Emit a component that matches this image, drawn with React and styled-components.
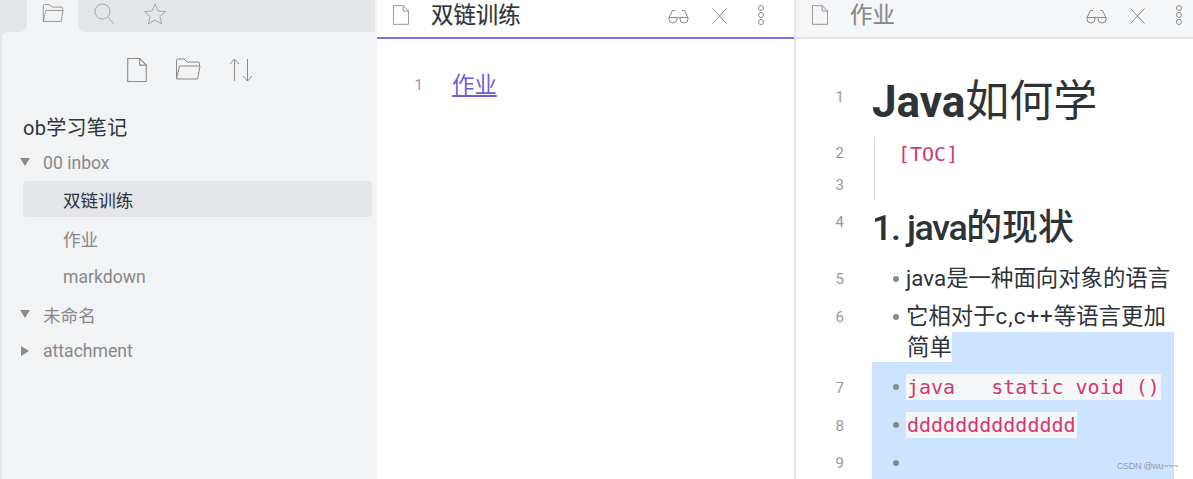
import React from 'react';
import styled, { createGlobalStyle } from 'styled-components';

const GlobalStyle = createGlobalStyle`
  html, body {
    margin: 0;
    height: 100%;
    overflow: hidden;
    background: #ffffff;
  }
  body {
    font-family: Roboto, "Noto Sans CJK SC", sans-serif;
    color: #2e3338;
  }
`;

const Page = styled.div`
  display: flex;
  height: 479px;
  width: 1193px;
  overflow: hidden;
  position: relative;
`;

const Sidebar = styled.aside`
  flex: 0 0 377px;
  display: flex;
  flex-direction: column;
  background: #e3e5e8;
`;

const TabStrip = styled.div`
  flex: 0 0 32px;
  display: flex;
  background: #f2f3f5;
`;

const TabLead = styled.div`
  flex: 0 0 27px;
  background: #e3e5e8;
  border-bottom-right-radius: 8px;
`;

const ActiveTab = styled.div`
  flex: 0 0 51px;
  display: flex;
  align-items: flex-start;
  justify-content: center;
  padding-top: 3px;
  box-sizing: border-box;
`;

const TabRest = styled.div`
  flex: 1;
  display: flex;
  align-items: flex-start;
  gap: 30px;
  padding: 3px 0 0 16px;
  margin-right: 2px;
  background: #e3e5e8;
  border-bottom-left-radius: 8px;
`;

const SidebarBody = styled.div`
  flex: 1;
  margin-left: 2px;
  background: #f2f3f5;
  border-top-left-radius: 6px;
  padding: 0 5px 0 21px;
`;

const FileActions = styled.div`
  display: flex;
  justify-content: center;
  gap: 28px;
  height: 82px;
  padding-top: 26px;
  margin-left: -15px;
  box-sizing: border-box;
`;

const VaultName = styled.div`
  font-size: 20px;
  line-height: 28px;
  letter-spacing: 0.3px;
  color: #2e3338;
  margin-bottom: 2px;
`;

const TreeRow = styled.div`
  display: flex;
  align-items: center;
  height: ${(p) => p.$height || 38}px;
  margin-bottom: ${(p) => (p.$active ? 2 : 0)}px;
  font-size: 17.6px;
  color: ${(p) => (p.$active ? '#2e3338' : '#888888')};
  padding-left: ${(p) => (p.$nested ? 40 : 0)}px;
  border-radius: 4px;
  background: ${(p) => (p.$active ? '#e3e5e8' : 'transparent')};
`;

const Caret = styled.svg`
  width: 20px;
  flex: 0 0 20px;
  height: 12px;
  margin: 0 3px 0 -3px;
  fill: #8a8a8a;
`;

const Pane = styled.section`
  display: flex;
  flex-direction: column;
  flex: ${(p) => (p.$grow ? 1 : '0 0 417px')};
  min-width: 0;
`;

const PaneHeader = styled.header`
  flex: 0 0 37px;
  height: 37px;
  display: flex;
  align-items: center;
  box-sizing: content-box;
  padding: 0 ${(p) => p.$pad}px 0 16px;
  background: ${(p) => (p.$focused ? '#ffffff' : '#f5f6f8')};
  border-bottom: 2px solid ${(p) => (p.$focused ? '#7f6df2' : '#e3e5e8')};
`;

const PaneHeaderRow = styled.div`
  flex: 1;
  display: flex;
  align-items: center;
  height: 30px;
  margin-bottom: 7px;
`;

const PaneTitle = styled.div`
  flex: 1;
  margin-left: 22px;
  font-size: 22.4px;
  line-height: 30px;
  color: ${(p) => (p.$focused ? '#2e3338' : '#888888')};
  -webkit-text-stroke: 0.2px currentColor;
`;

const HeaderActions = styled.div`
  display: flex;
  align-items: center;
`;

const ActionSlot = styled.span`
  display: block;
  margin-right: ${(p) => p.$gap || 0}px;
  padding-top: ${(p) => p.$top || 0}px;
`;

const LinkBody = styled.div`
  display: flex;
  padding-top: 31px;
`;

const Gutter = styled.div`
  flex: 0 0 46px;
  text-align: right;
  font-size: 15px;
  color: #999999;
  line-height: 30px;
  margin-right: 29px;
`;

const InternalLink = styled.a`
  font-size: 22.4px;
  line-height: 30px;
  color: #705dcf;
  text-decoration: underline;
`;

const Divider = styled.div`
  flex: 0 0 2px;
  background: #e3e5e8;
`;

const Editor = styled.div`
  display: flex;
  flex-direction: column;
  padding: 31px 19px 0 0;
`;

const Line = styled.div`
  display: flex;
  align-items: stretch;
  flex: 0 0 ${(p) => p.$height}px;
  height: ${(p) => p.$height}px;
`;

const LineNumber = styled.div`
  flex: 0 0 48px;
  text-align: right;
  font-size: 15px;
  color: #999999;
  line-height: 20px;
  padding-top: ${(p) => p.$top}px;
  margin-right: 28px;
  box-sizing: border-box;
`;

const LineBody = styled.div`
  flex: 1;
  min-width: 0;
  background: ${(p) => (p.$selected ? '#cce4ff' : 'transparent')};
`;

const Heading = styled.div`
  font-size: ${(p) => p.$size}px;
  font-weight: ${(p) => p.$weight || 400};
  line-height: ${(p) => p.$line}px;
  padding-top: ${(p) => p.$top || 0}px;
  color: #2e3338;

  b {
    font-weight: ${(p) => p.$latin || 700};
    letter-spacing: ${(p) => p.$track || 0}px;
  }
`;

const Quote = styled.div`
  height: 100%;
  margin-left: 2px;
  border-left: 1px solid #d8d8d8;
  padding: 4px 0 0 23px;
  box-sizing: border-box;
`;

const Code = styled.code`
  display: inline-block;
  vertical-align: top;
  font-family: "DejaVu Sans Mono", "Liberation Mono", monospace;
  font-size: 20px;
  line-height: 26px;
  color: #d13a6c;
  white-space: pre;
  padding: ${(p) => (p.$filled ? '0 1px' : '0')};
  background: ${(p) => (p.$filled ? '#f5f6f8' : 'transparent')};
`;

const BulletBody = styled.div`
  display: flex;
  align-items: flex-start;
  font-size: 22.4px;
  line-height: ${(p) => p.$line || 32}px;
  padding-top: ${(p) => p.$top}px;
  color: #2e3338;
`;

const Dot = styled.span`
  flex: 0 0 6px;
  width: 6px;
  height: 6px;
  border-radius: 50%;
  background: #8a8a8a;
  margin: ${(p) => p.$top}px 7px 0 21px;
`;

const BulletText = styled.div`
  flex: 1;
  min-width: 0;
`;

const Spaced = styled.span`
  letter-spacing: 1px;
`;

const WrapTail = styled.div`
  display: flex;
  height: 30px;
  padding-left: 35px;
  font-size: 22.4px;
  line-height: 30px;
  color: #2e3338;
`;

const SelectedTail = styled.div`
  flex: 1;
  background: #cce4ff;
`;

const Watermark = styled.div`
  position: absolute;
  right: 15px;
  bottom: 7px;
  font-family: "Liberation Sans", sans-serif;
  font-size: 9px;
  line-height: 12px;
  letter-spacing: -0.3px;
  color: #9a9a9a;
`;

const IconSvg = styled.svg`
  display: block;
  fill: none;
  stroke: ${(p) => p.$stroke || '#8a8a8a'};
  stroke-width: 1;
`;

const FileIcon = ({ w = 16, h = 20 }) => (
  <IconSvg width={w} height={h} viewBox="0 0 18 22">
    <path d="M.5.5h11l6 6v15H.5z" />
    <path d="M11.5.5v6h6" />
  </IconSvg>
);

const FolderIcon = ({ w = 26, h = 22 }) => (
  <IconSvg width={w} height={h} viewBox="0 0 26 22">
    <path d="M1.500 21V2.500q0-1.500 1.500-1.500h6l3 3h11q1.500 0 1.500 1.500V8" />
    <path d="M1.500 21l3-13h20.500l-2.500 13z" />
  </IconSvg>
);

const SearchIcon = () => (
  <IconSvg width={20} height={21} viewBox="0 0 20 21" $stroke="#a6a6a6">
    <circle cx="8.500" cy="8.500" r="7.500" />
    <path d="M14 14l5.500 6.500" />
  </IconSvg>
);

const StarIcon = () => (
  <IconSvg width={22} height={22} viewBox="0 0 22 22" $stroke="#a6a6a6">
    <path d="M11 1l3 7 7.500.6-5.700 4.900 1.800 7.500L11 17l-6.600 4 1.800-7.500L.5 8.600 8 8z" />
  </IconSvg>
);

const SortIcon = () => (
  <IconSvg width={24} height={24} viewBox="0 0 24 24">
    <path d="M5.500 23V1M1 6l4.500-5L10 6" />
    <path d="M18.500 1v22M14 18l4.500 5 4.500-5" />
  </IconSvg>
);

const GlassesIcon = () => (
  <IconSvg width={21} height={16} viewBox="0 0 21 16">
    <path d="M1 9.500h8v1.500a4 4 0 0 1-8 0z" />
    <path d="M12 9.500h8v1.500a4 4 0 0 1-8 0z" />
    <path d="M9 10q1.500-1.500 3 0M1 9.500L4.500 2.500H7M20 9.500l-3.500-7H14" />
  </IconSvg>
);

const CloseIcon = () => (
  <IconSvg width={15} height={16} viewBox="0 0 15 16">
    <path d="M.5.5l14 15M14.500.5l-14 15" />
  </IconSvg>
);

const MoreIcon = () => (
  <IconSvg width={8} height={20} viewBox="0 0 8 20">
    <circle cx="4" cy="3" r="2.500" />
    <circle cx="4" cy="10" r="2.500" />
    <circle cx="4" cy="17" r="2.500" />
  </IconSvg>
);

const CaretDown = () => (
  <Caret viewBox="0 0 20 12">
    <path d="M0 1h10L5 9z" />
  </Caret>
);

const CaretRight = () => (
  <Caret viewBox="0 0 20 12">
    <path d="M1 1l8 5-8 5z" />
  </Caret>
);

const PaneButtons = () => (
  <HeaderActions>
    <ActionSlot $gap={23} $top={2}><GlassesIcon /></ActionSlot>
    <ActionSlot $gap={30} $top={2}><CloseIcon /></ActionSlot>
    <ActionSlot><MoreIcon /></ActionSlot>
  </HeaderActions>
);

const App = () => (
  <Page>
    <GlobalStyle />
    <Sidebar>
      <TabStrip>
        <TabLead />
        <ActiveTab>
          <FolderIcon w={22} h={20} />
        </ActiveTab>
        <TabRest>
          <SearchIcon />
          <StarIcon />
        </TabRest>
      </TabStrip>
      <SidebarBody>
        <FileActions>
          <FileIcon w={20} h={24} />
          <FolderIcon />
          <SortIcon />
        </FileActions>
        <VaultName>ob学习笔记</VaultName>
        <TreeRow $height={37}><CaretDown />00 inbox</TreeRow>
        <TreeRow $nested $active $height={36}>双链训练</TreeRow>
        <TreeRow $nested>作业</TreeRow>
        <TreeRow $nested $height={39}>markdown</TreeRow>
        <TreeRow $height={37}><CaretDown />未命名</TreeRow>
        <TreeRow $height={36}><CaretRight />attachment</TreeRow>
      </SidebarBody>
    </Sidebar>
    <Pane>
      <PaneHeader $focused $pad={29}>
        <PaneHeaderRow>
          <FileIcon />
          <PaneTitle $focused>双链训练</PaneTitle>
          <PaneButtons />
        </PaneHeaderRow>
      </PaneHeader>
      <LinkBody>
        <Gutter>1</Gutter>
        <InternalLink>作业</InternalLink>
      </LinkBody>
    </Pane>
    <Divider />
    <Pane $grow>
      <PaneHeader $pad={10}>
        <PaneHeaderRow>
          <FileIcon />
          <PaneTitle>作业</PaneTitle>
          <PaneButtons />
        </PaneHeaderRow>
      </PaneHeader>
      <Editor>
        <Line $height={67}>
          <LineNumber $top={17}>1</LineNumber>
          <LineBody>
            <Heading $size={44} $line={60} $top={2}><b>Java</b>如何学</Heading>
          </LineBody>
        </Line>
        <Line $height={32}>
          <LineNumber $top={6}>2</LineNumber>
          <LineBody>
            <Quote><Code>[TOC]</Code></Quote>
          </LineBody>
        </Line>
        <Line $height={31}>
          <LineNumber $top={6}>3</LineNumber>
          <LineBody>
            <Quote />
          </LineBody>
        </Line>
        <Line $height={58}>
          <LineNumber $top={12}>4</LineNumber>
          <LineBody>
            <Heading $size={35.84} $line={50} $top={3} $weight={500} $latin={500} $track={-1.4}><b>1. java</b>的现状</Heading>
          </LineBody>
        </Line>
        <Line $height={39}>
          <LineNumber $top={11}>5</LineNumber>
          <LineBody>
            <BulletBody $top={4}>
              <Dot $top={14} />
              <BulletText>java是一种面向对象的语言</BulletText>
            </BulletBody>
          </LineBody>
        </Line>
        <Line $height={65}>
          <LineNumber $top={10}>6</LineNumber>
          <LineBody>
            <BulletBody $top={3}>
              <Dot $top={14} />
              <BulletText>它相对于<Spaced>c,c++</Spaced>等语言更加</BulletText>
            </BulletBody>
            <WrapTail>
              简单
              <SelectedTail />
            </WrapTail>
          </LineBody>
        </Line>
        <Line $height={44}>
          <LineNumber $top={16}>7</LineNumber>
          <LineBody $selected>
            <BulletBody $top={12} $line={26}>
              <Dot $top={10} />
              <BulletText><Code $filled>java   static void ()</Code></BulletText>
            </BulletBody>
          </LineBody>
        </Line>
        <Line $height={38}>
          <LineNumber $top={10}>8</LineNumber>
          <LineBody $selected>
            <BulletBody $top={6} $line={26}>
              <Dot $top={10} />
              <BulletText><Code $filled>dddddddddddddd</Code></BulletText>
            </BulletBody>
          </LineBody>
        </Line>
        <Line $height={36}>
          <LineNumber $top={9}>9</LineNumber>
          <LineBody $selected>
            <BulletBody $top={16} $line={26}>
              <Dot $top={0} />
            </BulletBody>
          </LineBody>
        </Line>
      </Editor>
    </Pane>
    <Watermark>CSDN @wu~~~</Watermark>
  </Page>
);

export default App;
